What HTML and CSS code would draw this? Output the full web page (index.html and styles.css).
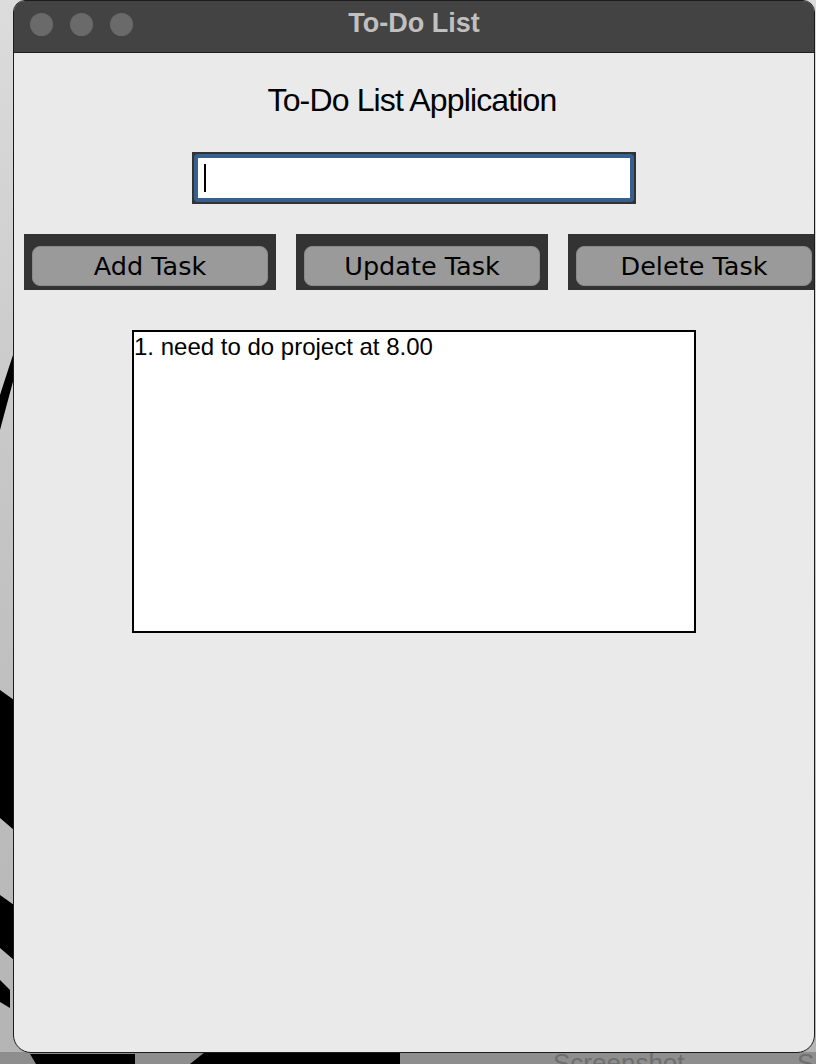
FILE: index.html
```html
<!DOCTYPE html>
<html lang="en">
<head>
<meta charset="utf-8">
<title>To-Do List</title>
<link rel="stylesheet" href="styles.css">
</head>
<body>
<div class="desktop">
  <svg class="wallpaper" width="816" height="1064" viewBox="0 0 816 1064" aria-hidden="true">
    <defs>
      <linearGradient id="wg" x1="0" y1="0" x2="0" y2="1">
        <stop offset="0" stop-color="#dcdcdc"/>
        <stop offset="0.5" stop-color="#c4c4c4"/>
        <stop offset="1" stop-color="#b4b4b4"/>
      </linearGradient>
    </defs>
    <rect width="816" height="1064" fill="url(#wg)"/>
    <path d="M0 430 L0 395 Q8 370 14 352 L14 378 Q8 400 0 430 Z" fill="#000"/>
    <path d="M0 690 L14 700 L14 830 L0 818 Z" fill="#000"/>
    <path d="M0 895 L14 905 L14 960 L0 948 Z" fill="#000"/>
    <path d="M0 980 L10 990 L10 1008 L0 1002 Z" fill="#000"/>
    <rect x="0" y="1052" width="816" height="12" fill="#8e8e8e"/>
    <path d="M30 1054 L135 1054 L135 1064 L36 1064 Z" fill="#000"/>
    <path d="M190 1064 L205 1052 L400 1052 L400 1064 Z" fill="#000"/>
    <text x="553" y="1072" class="wp-text">Screenshot</text>
    <text x="797" y="1072" class="wp-text">S</text>
  </svg>

  <div class="window">
    <header class="titlebar">
      <div class="lights">
        <span class="light"></span>
        <span class="light"></span>
        <span class="light"></span>
      </div>
      <div class="title">To-Do List</div>
      <div class="spacer"></div>
    </header>

    <main class="content">
      <h1 class="heading">To-Do List Application</h1>

      <div class="entry">
        <div class="entry-field"><span class="caret"></span></div>
      </div>

      <div class="actions">
        <div class="btn-frame"><div class="btn">Add Task</div></div>
        <div class="btn-frame"><div class="btn">Update Task</div></div>
        <div class="btn-frame"><div class="btn">Delete Task</div></div>
      </div>

      <div class="listbox">
        <div class="list-item">1. need to do project at 8.00</div>
      </div>
    </main>
  </div>
</div>
</body>
</html>
```

FILE: styles.css
```css
* {
  box-sizing: border-box;
}

html, body {
  margin: 0;
  padding: 0;
}

body {
  width: 816px;
  height: 1064px;
  overflow: hidden;
  font-family: "Liberation Sans", Arial, sans-serif;
  background: #c4c4c4;
}

.desktop {
  position: relative;
  width: 816px;
  height: 1064px;
  overflow: hidden;
}

.wallpaper {
  position: absolute;
  left: 0;
  top: 0;
}

.wp-text {
  font-family: "Liberation Sans", Arial, sans-serif;
  font-size: 26px;
  fill: #6e6e6e;
}

.window {
  position: relative;
  z-index: 1;
  margin-left: 13px;
  width: 802px;
  height: 1053px;
  border: 1px solid #1c1c1c;
  border-radius: 12px 12px 18px 18px;
  background: #eaeaea;
  overflow: hidden;
  display: flex;
  flex-direction: column;
}

.titlebar {
  flex: 0 0 auto;
  height: 52px;
  background: #434343;
  border-bottom: 1px solid #1e1e1e;
  display: grid;
  grid-template-columns: 1fr auto 1fr;
  align-items: center;
  padding-left: 16px;
}

.lights {
  display: flex;
  gap: 17px;
  align-items: center;
  margin-top: -5px;
}

.light {
  width: 23px;
  height: 23px;
  border-radius: 50%;
  background: #6a6a6a;
}

.title {
  font-family: "Liberation Sans", Arial, sans-serif;
  font-weight: bold;
  font-size: 27px;
  color: #c0c0c0;
  margin-top: -6px;
  transform: translateX(-8px);
}

.content {
  flex: 1 1 auto;
  display: flex;
  flex-direction: column;
  align-items: center;
}

.heading {
  margin: 29px 0 0;
  font-family: "Liberation Sans", Arial, sans-serif;
  font-weight: normal;
  font-size: 32px;
  line-height: 36px;
  letter-spacing: -0.85px;
  color: #000;
  transform: translateX(-2px);
}

.entry {
  margin-top: 34px;
  width: 444px;
  height: 52px;
  background: #333333;
  padding: 2px;
}

.entry-field {
  width: 100%;
  height: 100%;
  background: #fff;
  border: 4px solid #36618f;
  border-radius: 4px;
  display: flex;
  align-items: center;
  padding-left: 6px;
}

.caret {
  width: 2px;
  height: 28px;
  background: #000;
}

.actions {
  align-self: stretch;
  margin-top: 30px;
  padding-left: 10px;
  display: flex;
  gap: 20px;
}

.btn-frame {
  flex: 0 0 252px;
  height: 56px;
  background: #333333;
  padding: 12px 8px 4px 8px;
}

.btn {
  height: 40px;
  background: #9a9a9a;
  border: 1px solid #8a8a8a;
  border-radius: 8px;
  display: flex;
  align-items: center;
  justify-content: center;
  font-family: "DejaVu Sans", Verdana, sans-serif;
  font-size: 25.5px;
  color: #000;
}

.listbox {
  margin-top: 40px;
  width: 564px;
  height: 303px;
  background: #fff;
  border: 2px solid #000;
}

.list-item {
  font-family: "Liberation Sans", Arial, sans-serif;
  font-size: 24px;
  line-height: 27px;
  color: #000;
  padding-left: 0;
  margin-top: 1px;
}
```
